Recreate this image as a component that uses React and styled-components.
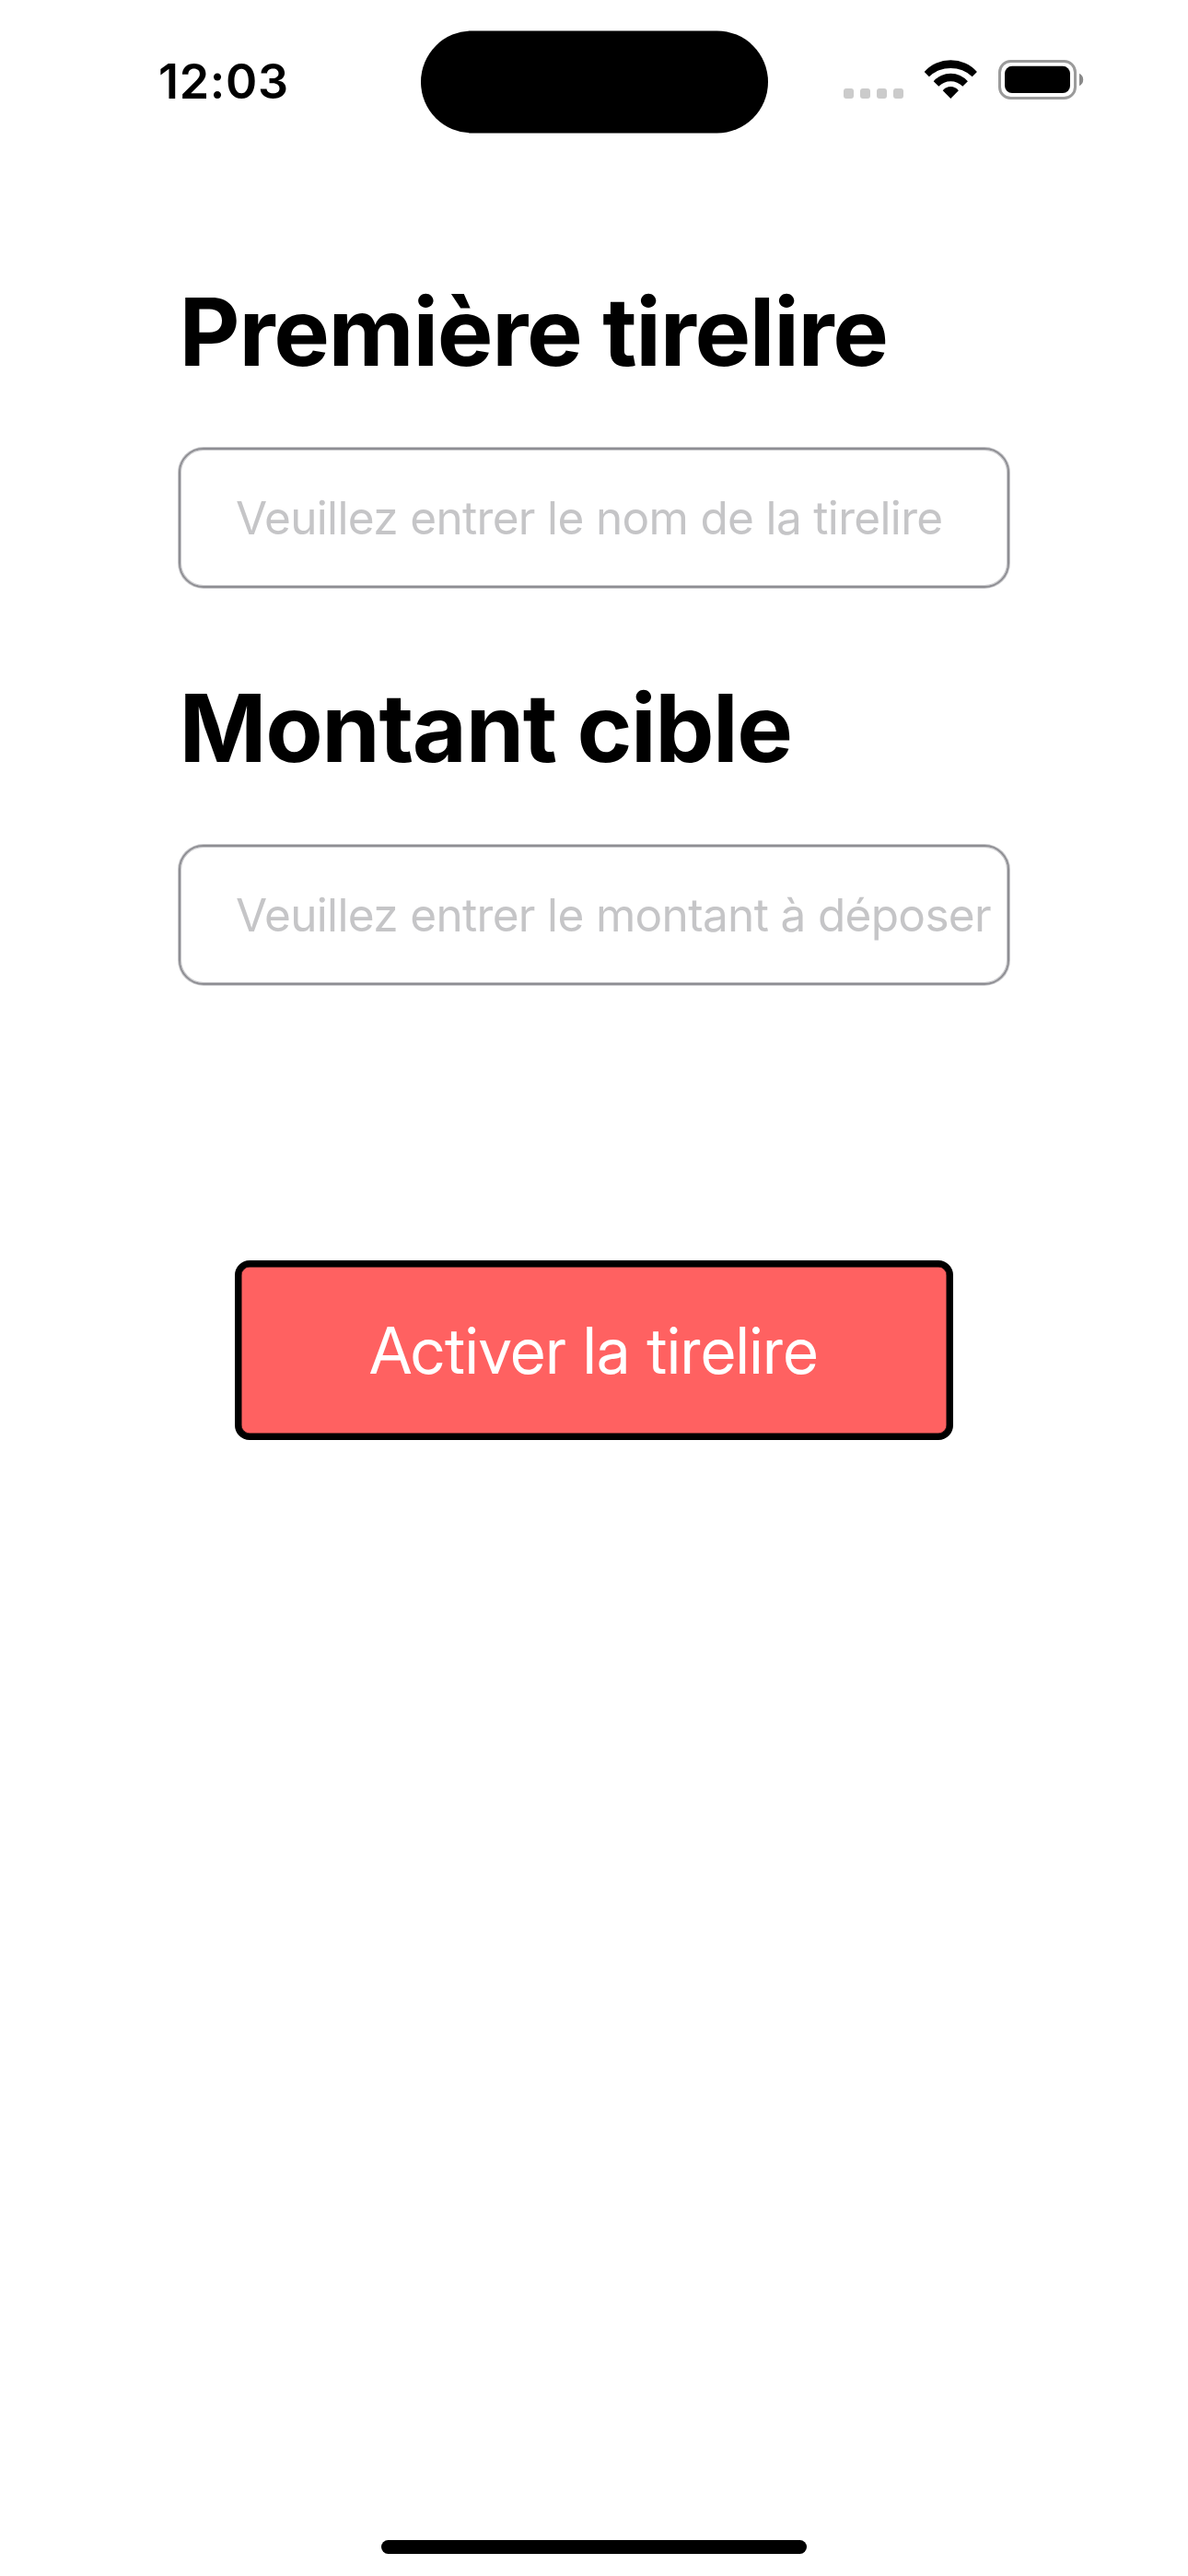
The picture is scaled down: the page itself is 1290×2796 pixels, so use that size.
import React from "react";
import styled, { createGlobalStyle } from "styled-components";

const GlobalStyle = createGlobalStyle`
  *, *::before, *::after { box-sizing: border-box; }
  body { margin: 0; background: #fff; }
`;

const Screen = styled.div`
  display: flex;
  flex-direction: column;
  width: 1290px;
  height: 2796px;
  background: #fff;
  color: #000;
  font-family: Inter, "Liberation Sans", sans-serif;
`;

const StatusBar = styled.header`
  display: grid;
  grid-template-columns: 1fr 377px 1fr;
  align-items: center;
  height: 177px;
`;

const Clock = styled.time`
  padding-left: 172px;
  font-size: 52px;
  font-weight: 600;
  letter-spacing: 0.7px;
  line-height: 64px;
`;

const Island = styled.div`
  height: 111px;
  border-radius: 56px;
  background: #000;
  transform: translateY(0.4px);
`;

const StatusIcons = styled.div`
  display: flex;
  align-items: flex-end;
  height: 43px;
  margin-bottom: 4px;
  padding-left: 82.5px;
`;

const CellDots = styled.div`
  display: flex;
  gap: 7px;
  margin: 0 22px 1px 0;
`;

const Dot = styled.span`
  width: 11px;
  height: 11px;
  border-radius: 3px;
  background: #cbcbcb;
`;

const WifiIcon = styled.svg`
  width: 59px;
  height: 43px;
  margin-right: 22px;
`;

const BatteryIcon = styled.svg`
  width: 94px;
  height: 43px;
`;

const Form = styled.form`
  display: flex;
  flex-direction: column;
  padding: 121px 194px 0;
`;

const Field = styled.label`
  display: flex;
  flex-direction: column;
  gap: ${(p) => p.$gap}px;
  margin-bottom: 90px;
`;

const FieldTitle = styled.span`
  padding-left: 0.6px;
  font-size: 102px;
  font-weight: 700;
  line-height: 124px;
  letter-spacing: ${(p) => p.$tracking}px;
  white-space: nowrap;
`;

const TextInput = styled.input`
  width: 902px;
  height: 152px;
  padding: 0 8px 0 60px;
  border: 2px solid #8e8e93;
  border-radius: 27px;
  box-shadow: 0 0 0 1px rgba(142, 142, 147, 0.5), inset 0 0 0 1px rgba(142, 142, 147, 0.5);
  background: #fff;
  outline: none;
  font-family: inherit;
  font-size: 49.5px;
  letter-spacing: -0.66px;

  &::placeholder {
    color: #c5c5c7;
    opacity: 1;
  }
`;

const SubmitButton = styled.button`
  align-self: center;
  width: 780px;
  height: 195px;
  margin-top: 209px;
  padding: 0;
  border: 7px solid #000;
  border-radius: 16px;
  box-shadow: inset 0 0 0 0.5px #000;
  background: #ff6161;
  color: #fff;
  font-family: "Inter Display", Inter, sans-serif;
  font-size: 70px;
  font-weight: 400;
  letter-spacing: 0.32px;
`;

const HomeIndicator = styled.div`
  width: 462px;
  height: 15px;
  margin: auto auto 24px;
  border-radius: 8px;
  background: #000;
`;

export default function App() {
  return (
    <Screen>
      <GlobalStyle />
      <StatusBar>
        <Clock>12:03</Clock>
        <Island />
        <StatusIcons>
          <CellDots>
            <Dot />
            <Dot />
            <Dot />
            <Dot />
          </CellDots>
          <WifiIcon viewBox="0 0 59 43">
            <path d="M0.7 13A38.3 38.3 0 0 1 57.9 13L52.7 18.3A33.9 33.9 0 0 0 5.9 18.3Z" />
            <path d="M10.7 23.3A24.4 24.4 0 0 1 47.9 23.3L42.3 28.7A18.3 18.3 0 0 0 16.3 28.7Z" />
            <path d="M20.7 33.3A10.8 10.8 0 0 1 37.9 33.3L29.3 42Z" />
          </WifiIcon>
          <BatteryIcon viewBox="0 0 94 43">
            <rect x="1.5" y="1.5" width="82" height="40" rx="12" fill="none" stroke="#9b9b9b" strokeWidth="3" />
            <rect x="7" y="6.8" width="71" height="29.2" rx="8" />
            <path d="M88 14.7A7.6 7.6 0 0 1 88 28.3Z" fill="#8a8a8a" />
          </BatteryIcon>
        </StatusIcons>
      </StatusBar>
      <Form>
        <Field $gap={64}>
          <FieldTitle $tracking={-1.3}>Première tirelire</FieldTitle>
          <TextInput placeholder="Veuillez entrer le nom de la tirelire" />
        </Field>
        <Field $gap={65}>
          <FieldTitle $tracking={-1.42}>Montant cible</FieldTitle>
          <TextInput placeholder="Veuillez entrer le montant à déposer" />
        </Field>
        <SubmitButton type="button">Activer la tirelire</SubmitButton>
      </Form>
      <HomeIndicator />
    </Screen>
  );
}
